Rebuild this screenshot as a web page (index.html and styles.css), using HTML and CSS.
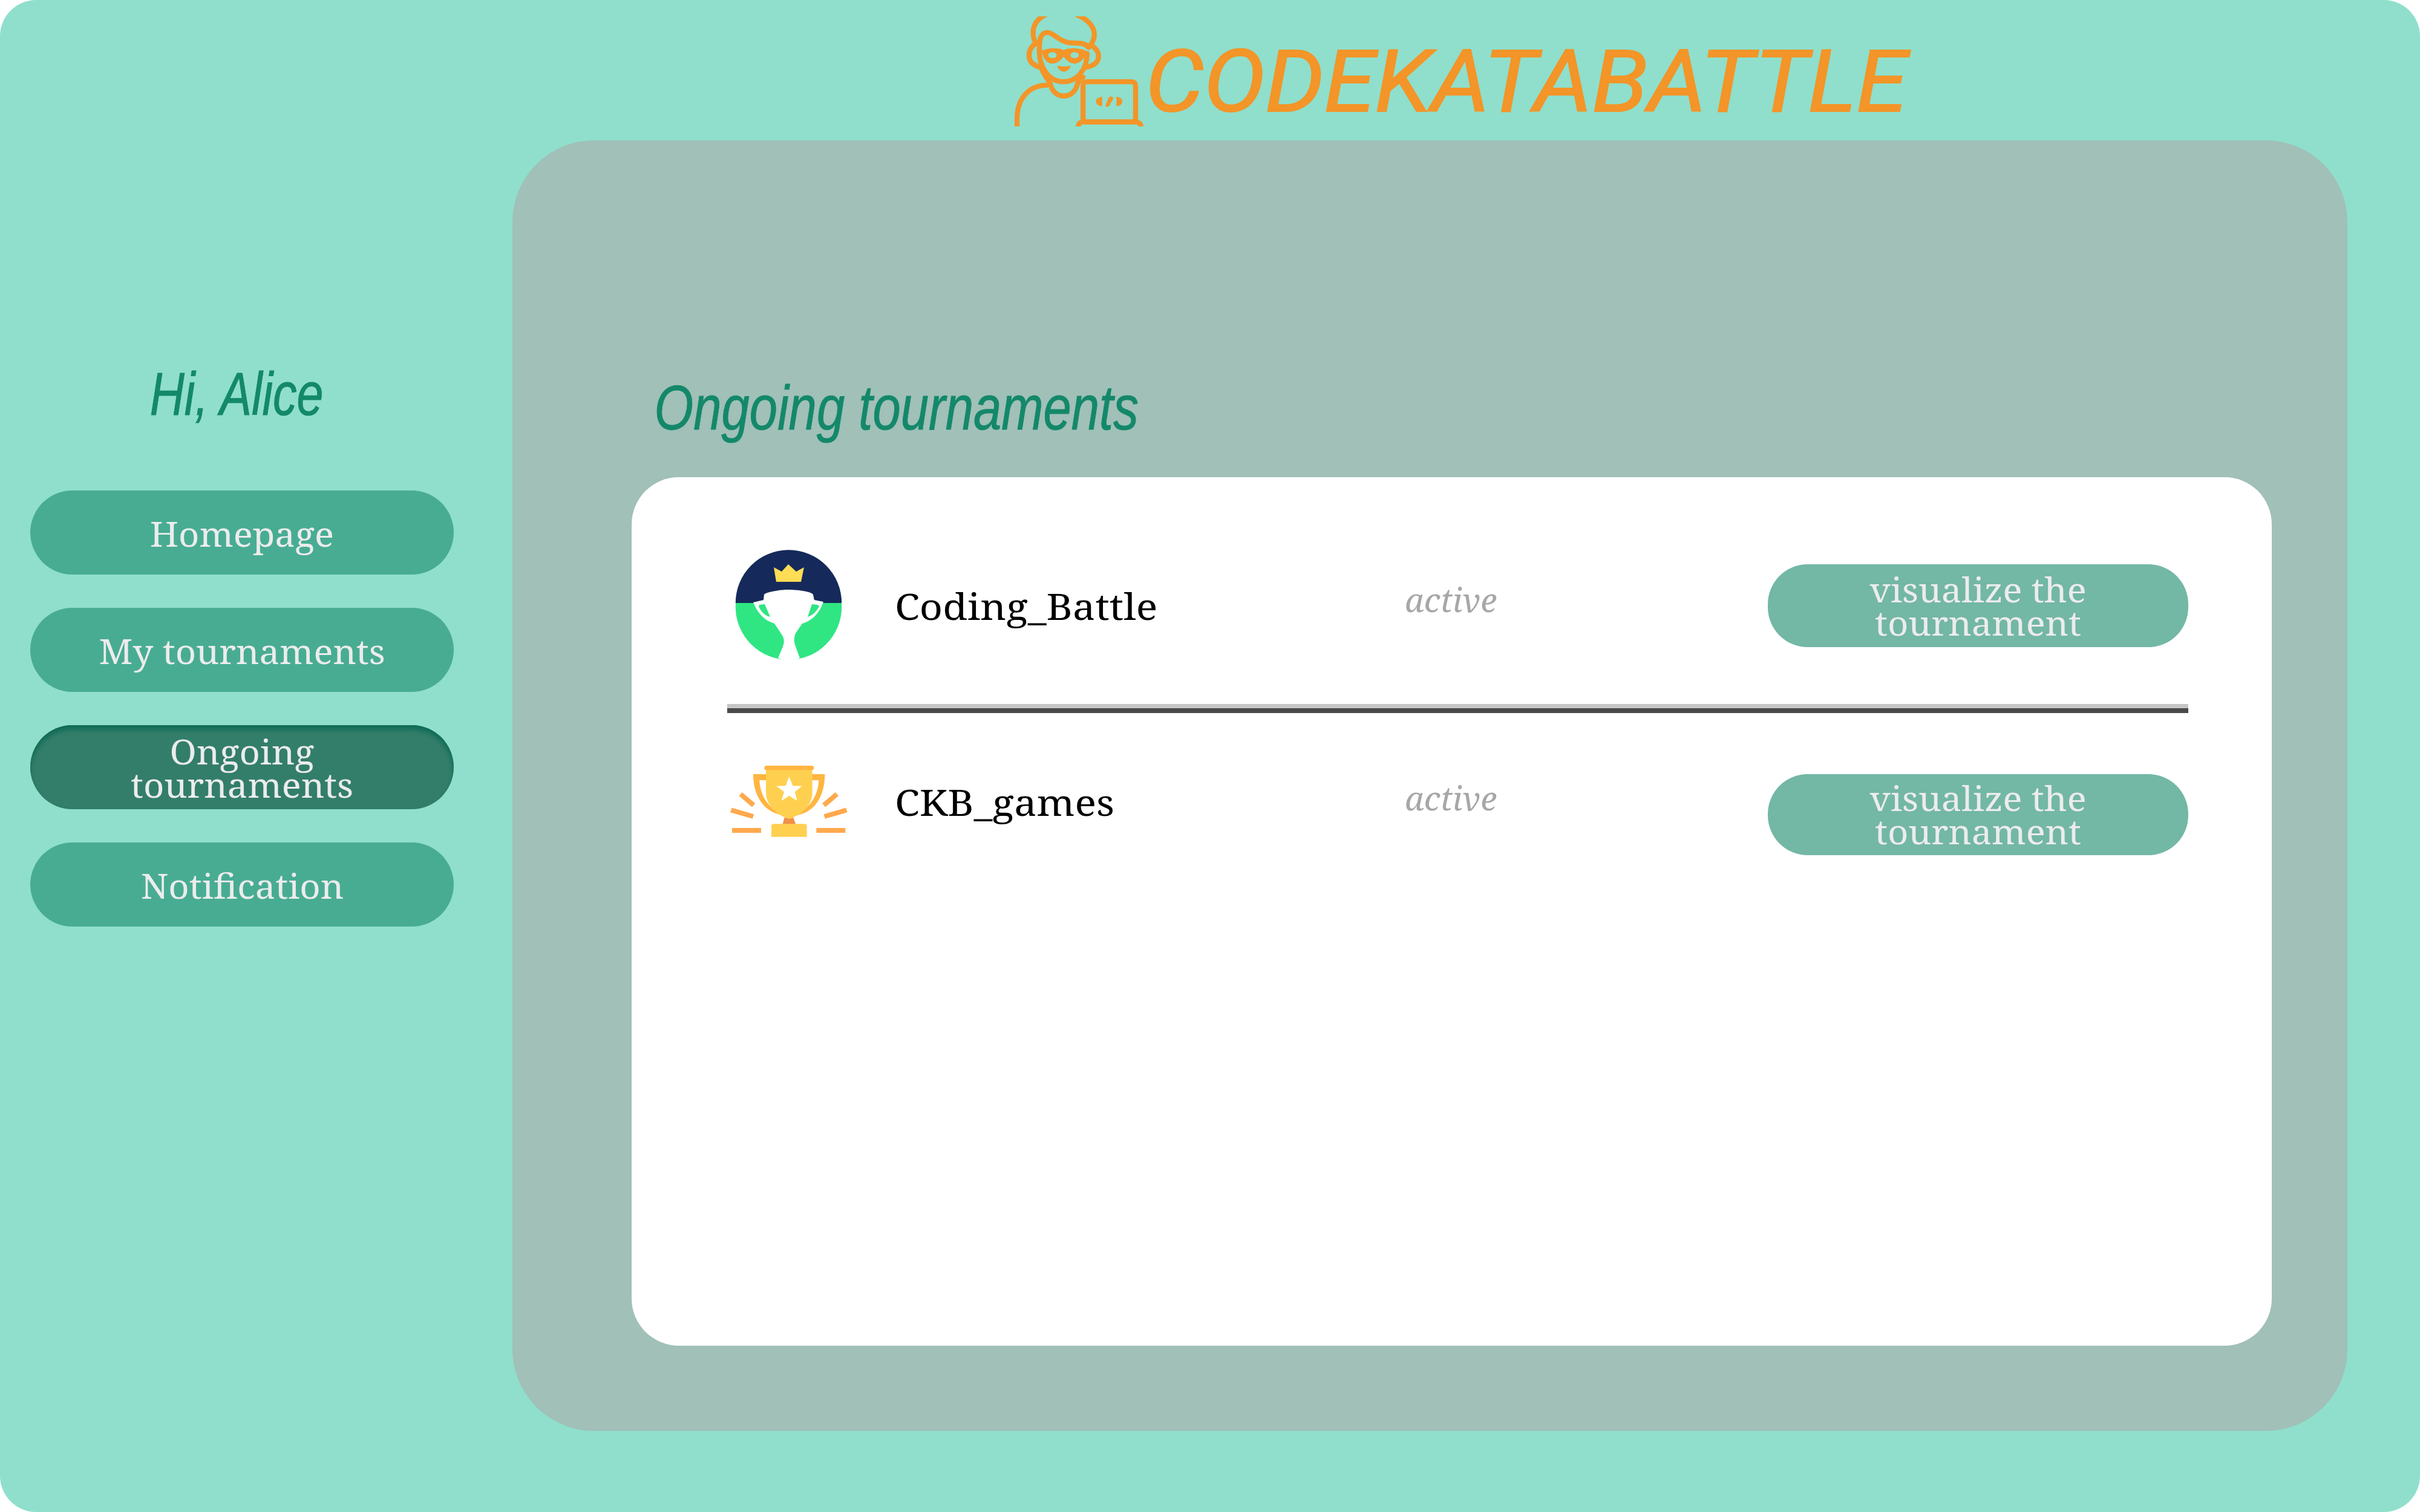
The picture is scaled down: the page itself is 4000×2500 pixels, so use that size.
FILE: index.html
```html
<!DOCTYPE html>
<html lang="en">
<head>
<meta charset="utf-8">
<title>CodeKataBattle</title>
<link rel="stylesheet" href="styles.css">
</head>
<body>
<div class="app">
  <header class="brand">
    <svg class="brand-icon" viewBox="80 50 640 547" aria-hidden="true">
      <g fill="none" stroke="#f39528" stroke-width="25" stroke-linecap="round" stroke-linejoin="round">
        <path d="M232 44C190 62 170 100 172 135C172 155 178 170 186 185"/>
        <path d="M392 44C440 62 476 100 476 140C476 160 470 175 458 192"/>
        <path d="M204 212C200 165 212 130 242 130C275 130 300 178 360 182C400 184 430 180 448 205"/>
        <path d="M203 210C198 300 250 375 322 375C395 375 440 310 440 235"/>
        <path d="M186 185C165 195 150 220 152 250C154 280 180 295 203 302"/>
        <path d="M458 192C480 205 498 225 497 250C496 280 470 295 440 302"/>
        <path d="M92 600V560C92 460 150 392 240 392"/>
        <path d="M210 300C225 340 240 360 256 378C262 420 290 446 325 446C360 446 385 420 392 385C398 372 405 362 420 352"/>
        <rect x="420" y="375" width="261" height="200" rx="18"/>
        <path d="M396 600C396 585 405 575 420 575H681C696 575 708 585 708 600"/>
      </g>
      <g fill="#f39528">
        <path fill-rule="evenodd" d="M215 222C245 205 300 205 323 218C350 205 405 205 436 222C436 255 405 285 378 285C352 285 335 265 323 250C311 265 295 285 268 285C240 285 218 255 215 222ZM247 243a21 15 0 1 0 42 0a21 15 0 1 0 -42 0ZM357 243a21 15 0 1 0 42 0a21 15 0 1 0 -42 0Z"/>
        <path d="M515 450V497C495 495 484 485 484 473C484 461 495 452 515 450Z"/>
        <path d="M548 452C558 445 572 448 569 460L552 492C545 504 528 502 533 488Z"/>
        <path d="M586 450C606 452 615 461 615 473C615 485 606 495 586 497Z"/>
        <path d="M292 295C312 300 338 300 358 295C354 314 340 325 325 325C310 325 296 314 292 295Z"/>
      </g>
    </svg>
    <span class="brand-name">CODEKATABATTLE</span>
  </header>

  <aside class="sidebar">
    <h2 class="greeting">Hi, Alice</h2>
    <nav class="nav">
      <a class="nav-item"><span class="label">Homepage</span></a>
      <a class="nav-item"><span class="label">My tournaments</span></a>
      <a class="nav-item is-active"><span class="label">Ongoing tournaments</span></a>
      <a class="nav-item"><span class="label">Notification</span></a>
    </nav>
  </aside>

  <main class="panel">
    <h1 class="panel-title">Ongoing tournaments</h1>
    <section class="card">
      <div class="row row-first">
        <svg class="row-icon" viewBox="0 0 400 240" aria-hidden="true">
          <circle cx="153.500" cy="120.300" r="87.700" fill="#2fe683"/>
          <path d="M65.800 114A87.700 87.700 0 0 1 241.200 114Z" fill="#152a5a"/>
          <path d="M129 55L142 62L153 50L166 62L179 55L174 79H133Z" fill="#ffdd55"/>
          <path d="M113 100C115 97 135 92 153 92C172 92 192 96 194 100C195 104 195 107 196 109L211 112C206 128 194 143 176 148L165 164C162 172 162 178 165 186L172 205C160 210 148 210 136 205L144 186C147 178 146 172 142 166L130 148C112 143 101 128 95 113L112 109Z" fill="#fff"/>
          <path d="M105 117L114 116L123 137C114 135 108 128 104 120Z" fill="#2fe683"/>
          <path d="M192 116L202 117L204 120C199 128 194 134 185 137Z" fill="#2fe683"/>
        </svg>
        <span class="row-name">Coding_Battle</span>
        <em class="row-status">active</em>
        <a class="row-action"><span class="label">visualize the tournament</span></a>
      </div>
      <hr class="divider">
      <div class="row row-second">
        <svg class="row-icon" viewBox="0 0 900 540" aria-hidden="true">
          <path d="M440 365L483 365L497 400H430Z" fill="#f2904a"/>
          <path d="M285 150H350V180H316C320 260 360 320 440 356L420 352C340 335 285 260 285 150Z" fill="#ffb541"/>
          <path d="M640 150H575V180H610C606 260 565 320 490 356L510 352C590 335 640 260 640 150Z" fill="#ffb541"/>
          <path d="M348 122H578V240C578 300 530 352 462 372C395 352 348 300 348 240Z" fill="#ffd050"/>
          <rect x="340" y="108" width="246" height="22" rx="11" fill="#ffb541"/>
          <path d="M463 162L481 208L527 209L491 238L503 282L463 257L425 282L438 238L400 209L446 208Z" fill="#fff"/>
          <path d="M375 407C375 400 380 397 386 397H540C546 397 551 400 551 407V461H375Z" fill="#ffd050"/>
          <g fill="none" stroke="#ffa94d" stroke-width="24">
            <path d="M222 249L287 304"/><path d="M175 328L285 360"/><path d="M180 429H324"/>
            <path d="M700 249L635 304"/><path d="M748 328L638 360"/><path d="M742 429H598"/>
          </g>
        </svg>
        <span class="row-name">CKB_games</span>
        <em class="row-status">active</em>
        <a class="row-action"><span class="label">visualize the tournament</span></a>
      </div>
    </section>
  </main>
</div>
</body>
</html>
```
FILE: styles.css
```css
* { box-sizing: border-box; }
html, body { margin: 0; padding: 0; background: #fff; }

.app {
  width: 4000px;
  height: 2500px;
  background: #8fdfcc;
  border-radius: 60px;
  overflow: hidden;
  display: grid;
  grid-template-columns: 847px 3033px;
  grid-template-rows: 232px 2134px;
  font-family: "Noto Serif", "DejaVu Serif", serif;
}

.brand {
  grid-column: 1 / 3;
  display: flex;
  align-items: flex-start;
  padding: 27px 0 0 1677px;
}
.brand-icon { width: 213px; height: 182px; flex: none; }
.brand-name {
  margin: 26px 0 0 3px;
  font-family: Roboto, sans-serif;
  font-style: italic;
  font-weight: 400;
  font-size: 142px;
  line-height: 166px;
  color: #f39528;
  -webkit-text-stroke: 2px #f39528;
  white-space: nowrap;
  transform: scaleX(1.075);
  transform-origin: left center;
}

.sidebar { padding: 364px 0 0 50px; }
.greeting {
  margin: 0 0 0 -5px;
  width: 700px;
  padding-right: 10px;
  text-align: center;
  font-family: "Liberation Sans", sans-serif;
  font-style: italic;
  font-weight: 400;
  font-size: 100px;
  line-height: 110px;
  color: #14886a;
  -webkit-text-stroke: 1px #14886a;
  transform: scaleX(0.79);
}
.nav { display: flex; flex-direction: column; gap: 55px; width: 700px; margin-top: 105px; }
.nav-item {
  height: 139px;
  border-radius: 70px;
  background: #48ac93;
  color: #ececec;
  display: flex;
  align-items: center;
  justify-content: center;
  text-align: center;
  padding: 3px 60px 0;
  font-size: 56px;
  line-height: 55px;
}
.label { display: block; transform: scaleX(1.065); }
.is-active {
  background: #337e6a;
  box-shadow: inset 0 7px 8px #0d6b55;
}

.panel {
  background: #a0c0b8;
  border-radius: 135px;
  display: flex;
  flex-direction: column;
  padding: 0 125px 141px 197px;
}
.panel-title {
  margin: 382px 0 0 0;
  height: 175px;
  padding-left: 47px;
  font-family: "Liberation Sans", sans-serif;
  font-style: italic;
  font-weight: 400;
  font-size: 104px;
  line-height: 120px;
  color: #14886a;
  -webkit-text-stroke: 1px #14886a;
  transform: scaleX(0.8);
  transform-origin: left center;
}
.card {
  flex: 1;
  background: #fff;
  border-radius: 78px;
  padding: 0 138px 0 158px;
}

.row {
  display: grid;
  grid-template-columns: 329px 845px 598px 695px;
  align-items: center;
  margin-left: -52px;
}
.row-first { height: 375px; padding-top: 50px; }
.row-second { height: 336px; }
.row-icon { display: block; }
.row-first .row-icon { width: 400px; height: 240px; margin-top: 3px; }
.row-second .row-icon { width: 300px; height: 180px; margin-bottom: 54px; }
.row-name {
  font-size: 61px;
  color: #000;
  transform: scaleX(1.09);
  transform-origin: left center;
}
.row-second .row-name { margin-bottom: 44px; }
.row-status { font-size: 55px; color: #a5a8a5; margin: 0 0 22px -2px; }
.row-second .row-status { margin-bottom: 58px; }
.row-action {
  height: 137px;
  border-radius: 66px;
  background: #73b7a5;
  color: #ececec;
  display: flex;
  align-items: center;
  justify-content: center;
  text-align: center;
  padding: 0 150px;
  font-size: 56px;
  line-height: 55px;
}
.row-second .row-action { height: 134px; }
.divider {
  margin: 0;
  height: 15px;
  border: 0;
  border-top: 7px solid #c6c6c6;
  border-bottom: 8px solid #4a4a4a;
}
```
